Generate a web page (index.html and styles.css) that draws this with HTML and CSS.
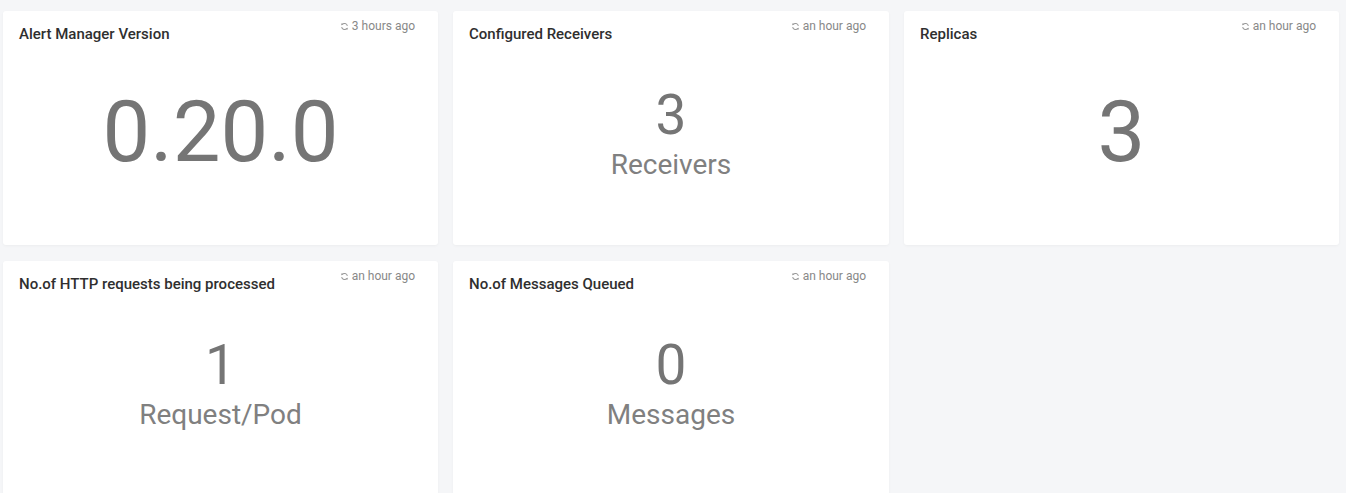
FILE: index.html
```html
<!DOCTYPE html>
<html>
<head>
<meta charset="utf-8">
<link rel="stylesheet" href="styles.css">
</head>
<body>
<div class="grid">
  <div class="card">
    <div class="head">
      <div class="title">Alert Manager Version</div>
      <div class="time"><svg class="ico" viewBox="0 0 10 10"><path d="M8.2 4.2A3.3 3.3 0 0 0 2.4 2.9" /><path d="M1.8 5.8A3.3 3.3 0 0 0 7.6 7.1" /><path class="fill" d="M1.2 1.6L3.6 1.9L1.6 4Z" /><path class="fill" d="M8.8 8.4L6.4 8.1L8.4 6Z" /></svg>3 hours ago</div>
    </div>
    <div class="body"><div class="big">0.20.0</div></div>
  </div>
  <div class="card">
    <div class="head">
      <div class="title">Configured Receivers</div>
      <div class="time"><svg class="ico" viewBox="0 0 10 10"><path d="M8.2 4.2A3.3 3.3 0 0 0 2.4 2.9" /><path d="M1.8 5.8A3.3 3.3 0 0 0 7.6 7.1" /><path class="fill" d="M1.2 1.6L3.6 1.9L1.6 4Z" /><path class="fill" d="M8.8 8.4L6.4 8.1L8.4 6Z" /></svg>an hour ago</div>
    </div>
    <div class="body"><div class="num">3</div><div class="unit">Receivers</div></div>
  </div>
  <div class="card">
    <div class="head">
      <div class="title">Replicas</div>
      <div class="time"><svg class="ico" viewBox="0 0 10 10"><path d="M8.2 4.2A3.3 3.3 0 0 0 2.4 2.9" /><path d="M1.8 5.8A3.3 3.3 0 0 0 7.6 7.1" /><path class="fill" d="M1.2 1.6L3.6 1.9L1.6 4Z" /><path class="fill" d="M8.8 8.4L6.4 8.1L8.4 6Z" /></svg>an hour ago</div>
    </div>
    <div class="body"><div class="big">3</div></div>
  </div>
  <div class="card">
    <div class="head">
      <div class="title">No.of HTTP requests being processed</div>
      <div class="time"><svg class="ico" viewBox="0 0 10 10"><path d="M8.2 4.2A3.3 3.3 0 0 0 2.4 2.9" /><path d="M1.8 5.8A3.3 3.3 0 0 0 7.6 7.1" /><path class="fill" d="M1.2 1.6L3.6 1.9L1.6 4Z" /><path class="fill" d="M8.8 8.4L6.4 8.1L8.4 6Z" /></svg>an hour ago</div>
    </div>
    <div class="body"><div class="num">1</div><div class="unit">Request/Pod</div></div>
  </div>
  <div class="card">
    <div class="head">
      <div class="title">No.of Messages Queued</div>
      <div class="time"><svg class="ico" viewBox="0 0 10 10"><path d="M8.2 4.2A3.3 3.3 0 0 0 2.4 2.9" /><path d="M1.8 5.8A3.3 3.3 0 0 0 7.6 7.1" /><path class="fill" d="M1.2 1.6L3.6 1.9L1.6 4Z" /><path class="fill" d="M8.8 8.4L6.4 8.1L8.4 6Z" /></svg>an hour ago</div>
    </div>
    <div class="body"><div class="num">0</div><div class="unit">Messages</div></div>
  </div>
</div>
</body>
</html>
```
FILE: styles.css
```css
html, body {
  margin: 0;
  padding: 0;
  background: #f5f6f8;
  font-family: Roboto, "Liberation Sans", sans-serif;
  overflow: hidden;
}
.grid {
  display: grid;
  grid-template-columns: 435px 436px 435px;
  grid-auto-rows: 234px;
  column-gap: 15px;
  row-gap: 16px;
  padding: 11px 0 0 3px;
}
.card {
  background: #fff;
  border-radius: 3px;
  box-shadow: 0 1px 3px rgba(0, 0, 0, 0.04);
  display: flex;
  flex-direction: column;
}
.head {
  display: flex;
  justify-content: space-between;
  align-items: flex-start;
  padding: 8px 23px 0 16px;
}
.title {
  font-size: 15px;
  font-weight: 500;
  color: #2f2f2f;
  padding-top: 6px;
  line-height: 18px;
}
.time {
  font-size: 12px;
  color: #888;
  line-height: 14px;
  display: flex;
  align-items: center;
}
.ico {
  width: 9px;
  height: 9px;
  margin-right: 3px;
  fill: none;
  stroke: #999;
  stroke-width: 1.2;
}
.ico .fill {
  fill: #999;
  stroke: none;
}
.body {
  flex: 1;
  display: flex;
  flex-direction: column;
  align-items: center;
  justify-content: center;
  padding-bottom: 14px;
}
.big {
  font-size: 85px;
  color: #757575;
  line-height: 1;
  margin-bottom: 9px;
}
.num {
  font-size: 55px;
  color: #757575;
  line-height: 1;
}
.unit {
  font-size: 28px;
  color: #808080;
  line-height: 1.55;
}
```
